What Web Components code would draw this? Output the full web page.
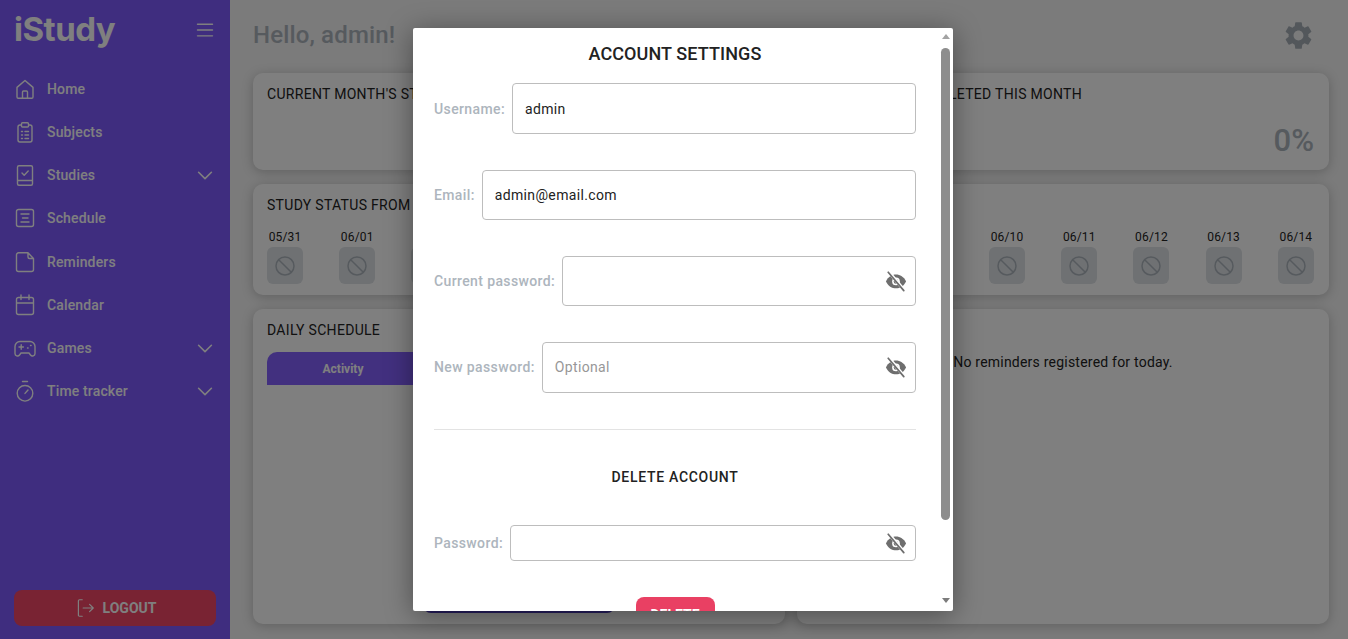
<!DOCTYPE html>
<html lang="en">
<head>
<meta charset="utf-8">
<title>iStudy</title>
<style>
html, body { margin: 0; height: 100%; overflow: hidden; }
body { font-family: Roboto, "Liberation Sans", sans-serif; }
</style>
</head>
<body>
<study-app>
  <side-bar>
    <nav-item icon="home">Home</nav-item>
    <nav-item icon="clipboard">Subjects</nav-item>
    <nav-item icon="book" more>Studies</nav-item>
    <nav-item icon="schedule">Schedule</nav-item>
    <nav-item icon="note">Reminders</nav-item>
    <nav-item icon="calendar">Calendar</nav-item>
    <nav-item icon="gamepad" more>Games</nav-item>
    <nav-item icon="stopwatch" more>Time tracker</nav-item>
  </side-bar>
  <dash-board>
    <dash-card heading="CURRENT MONTH'S STUDIES" style="--h:97px"></dash-card>
    <dash-card heading="% OF STUDIES COMPLETED THIS MONTH" style="--h:97px"><big-stat>0%</big-stat></dash-card>
    <dash-card wide heading="STUDY STATUS FROM" style="--h:111px">
      <day-strip days="05/31,06/01,06/02,06/03,06/04,06/05,06/06,06/07,06/08,06/09,06/10,06/11,06/12,06/13,06/14"></day-strip>
    </dash-card>
    <dash-card heading="DAILY SCHEDULE" style="--h:315px"><schedule-table></schedule-table></dash-card>
    <dash-card heading="TODAY'S REMINDERS" style="--h:315px"><empty-note>No reminders registered for today.</empty-note></dash-card>
  </dash-board>
  <settings-modal>
    <field-row label="Username:">admin</field-row>
    <field-row label="Email:">admin@email.com</field-row>
    <field-row label="Current password:" secret></field-row>
    <field-row label="New password:" secret placeholder="Optional"></field-row>
    <delete-section>
      <field-row label="Password:" secret compact></field-row>
    </delete-section>
  </settings-modal>
</study-app>

<script>
const ICONS = {
  home: 'M4 20V10.4L12 3.5l8 6.9V20a1.3 1.3 0 0 1-1.3 1.3H5.300A1.3 1.3 0 0 1 4 20zM9.500 21.300V15a1 1 0 0 1 1-1h3a1 1 0 0 1 1 1v6.300',
  clipboard: 'M8.500 5H7a2 2 0 0 0-2 2v13a2 2 0 0 0 2 2h10a2 2 0 0 0 2-2V7a2 2 0 0 0-2-2h-1.500M9.500 2.800h5a1 1 0 0 1 1 1V6a1 1 0 0 1-1 1h-5a1 1 0 0 1-1-1V3.800a1 1 0 0 1 1-1zM8.500 11.500h1M12 11.500h3.500M8.500 15h1M12 15h3.500M8.500 18.500h1M12 18.500h3.500',
  book: 'M6 2.800h12a1.500 1.500 0 0 1 1.500 1.500v16.400a1.500 1.500 0 0 1-1.500 1.500H6a1.500 1.500 0 0 1-1.500-1.500V4.300A1.500 1.500 0 0 1 6 2.800zM4.500 17.500h15M9 10l2.200 2.200L15.200 8',
  schedule: 'M5.500 3.500h13a2 2 0 0 1 2 2v13a2 2 0 0 1-2 2h-13a2 2 0 0 1-2-2v-13a2 2 0 0 1 2-2zM8 8h8M9.500 12H15M8 16h8',
  note: 'M5.500 2.800H15l5.500 5.700v11a2 2 0 0 1-2 2h-13a2 2 0 0 1-2-2V4.800a2 2 0 0 1 2-2zM15 2.800V7a1.500 1.500 0 0 0 1.500 1.500h4',
  calendar: 'M5.500 4.500h13a2 2 0 0 1 2 2v13a2 2 0 0 1-2 2h-13a2 2 0 0 1-2-2v-13a2 2 0 0 1 2-2zM3.500 10h17M8 2v4.500M16 2v4.500',
  gamepad: 'M7 5.500h10a5 5 0 0 1 5 5v7a2.500 2.500 0 0 1-4.500 1.500L16 17H8l-1.500 2A2.500 2.500 0 0 1 2 17.500v-7a5 5 0 0 1 5-5zM6 11h4.400M8.200 8.800v4.400M14.500 12h.6M17.500 9.500h.6',
  stopwatch: 'M12 6.500a7.800 7.800 0 1 0 0 15.600 7.800 7.800 0 0 0 0-15.600zM9.500 2.500h5M12 14.400l3-3.400',
  chevron: 'M5 9l7 7 7-7',
  menu: 'M3 5h18M3 12h18M3 19h18',
  logout: 'M9 3H6a1.200 1.200 0 0 0-1.200 1.200v15.600A1.200 1.200 0 0 0 6 21h3M10 12h11M17 8l4 4-4 4',
  ban: 'M12 3a9 9 0 1 0 0 18 9 9 0 0 0 0-18zM5.700 5.700l12.600 12.600'
};
const GEAR = 'M19.14 12.94c.04-.3.06-.61.06-.94 0-.32-.02-.64-.07-.94l2.03-1.58a.49.49 0 0 0 .12-.61l-1.920-3.320a.488.488 0 0 0-.59-.22l-2.390.96c-.5-.38-1.030-.7-1.620-.94l-.36-2.540a.484.484 0 0 0-.48-.41h-3.840c-.24 0-.43.17-.47.41l-.36 2.540c-.59.24-1.130.57-1.620.94l-2.390-.96c-.22-.08-.47 0-.59.22L2.740 8.870c-.12.21-.08.47.12.61l2.030 1.580c-.05.3-.09.63-.09.94s.02.64.07.94l-2.030 1.580a.49.49 0 0 0-.12.61l1.920 3.320c.12.22.37.29.59.22l2.390-.96c.5.38 1.030.7 1.620.94l.36 2.54c.05.24.24.41.48.41h3.840c.24 0 .44-.17.47-.41l.36-2.540c.59-.24 1.130-.56 1.620-.94l2.390.96c.22.08.47 0 .59-.22l1.920-3.320c.12-.22.07-.47-.12-.61l-2.010-1.580zM12 15.600c-1.980 0-3.600-1.620-3.600-3.600s1.620-3.600 3.600-3.600 3.600 1.620 3.600 3.600-1.620 3.600-3.600 3.600z';

function strokeIcon(name, size, width) {
  return `<svg width="${size}" height="${size}" viewBox="0 0 24 24" fill="none" stroke="currentColor"
    stroke-width="${width || 1.4}" stroke-linecap="round" stroke-linejoin="round"><path d="${ICONS[name]}"/></svg>`;
}

class StudyApp extends HTMLElement {
  constructor() {
    super();
    this.attachShadow({ mode: 'open' }).innerHTML = `
<style>
:host { display: flex; height: 639px; overflow: hidden; background: #f6f6f6; position: relative; }
</style>
<slot></slot>`;
  }
}

class SideBar extends HTMLElement {
  constructor() {
    super();
    this.attachShadow({ mode: 'open' }).innerHTML = `
<style>
:host { display: flex; flex-direction: column; flex: 0 0 230px; height: 100%; box-sizing: border-box; background: #7e5bff; color: #fff; }
.brand { display: flex; justify-content: space-between; align-items: flex-start; height: 67.3px; padding: 0 15px 0 14px; }
.logo { font: 700 33px/58px Inter, sans-serif; letter-spacing: -.5px; color: #fff; }
.menu { display: flex; margin-top: 20px; }
.logout { display: flex; align-items: center; justify-content: center; gap: 7px; margin: auto 14px 13px; height: 36px; padding-bottom: 1px; box-sizing: border-box;
  border-radius: 8px; background: #f34666; font: 700 14px Roboto, sans-serif; color: #fff; }
</style>
<div class="brand"><span class="logo">iStudy</span><span class="menu">${strokeIcon('menu', 20, 1.7)}</span></div>
<slot></slot>
<div class="logout">${strokeIcon('logout', 22, 1.3)}<span>LOGOUT</span></div>`;
  }
}

class NavItem extends HTMLElement {
  constructor() {
    super();
    this.attachShadow({ mode: 'open' });
  }

  connectedCallback() {
    const more = this.hasAttribute('more') ? strokeIcon('chevron', 22, 1.7) : '';
    this.shadowRoot.innerHTML = `
<style>
:host { display: flex; align-items: center; gap: 10px; height: 43.2px; padding: 0 14px 0 13px; font: 500 14px Roboto, sans-serif; letter-spacing: .15px; color: #fff; }
svg { flex: none; display: block; }
.label { flex: 1; }
</style>
${strokeIcon(this.getAttribute('icon'), 24)}<span class="label"><slot></slot></span>${more}`;
  }
}

class DashBoard extends HTMLElement {
  constructor() {
    super();
    this.attachShadow({ mode: 'open' }).innerHTML = `
<style>
:host { display: block; flex: 1; box-sizing: border-box; padding: 0 19px 0 23px; }
header { display: flex; justify-content: space-between; align-items: center; height: 73px; padding-bottom: 3px; box-sizing: border-box; }
h1 { margin: 0; font: 500 24px Roboto, sans-serif; letter-spacing: .15px; color: #adb5bd; }
svg { display: block; margin-right: 14px; fill: #a6aeb6; }
.grid { display: grid; grid-template-columns: 532px 532px; justify-content: space-between; gap: 14px 12px; }
</style>
<header><h1>Hello, admin!</h1><svg width="33" height="33" viewBox="0 0 24 24"><path d="${GEAR}"/></svg></header>
<div class="grid"><slot></slot></div>`;
  }
}

class DashCard extends HTMLElement {
  constructor() {
    super();
    this.attachShadow({ mode: 'open' });
  }

  connectedCallback() {
    this.shadowRoot.innerHTML = `
<style>
:host { display: flex; flex-direction: column; box-sizing: border-box; height: var(--h); padding: 14px; background: #fff; border-radius: 10px;
  box-shadow: 0 2px 12px rgba(0,0,0,.22); }
:host([wide]) { grid-column: 1 / -1; }
h2 { margin: 0; font: 400 14px/15px Roboto, sans-serif; letter-spacing: .3px; color: #222; }
.body { flex: 1; display: flex; flex-direction: column; min-height: 0; }
</style>
<h2>${this.getAttribute('heading')}</h2>
<div class="body"><slot></slot></div>`;
  }
}

class BigStat extends HTMLElement {
  constructor() {
    super();
    this.attachShadow({ mode: 'open' }).innerHTML = `
<style>
:host { display: block; margin: 21px 1px 0 0; text-align: right; font: 500 31px/36px Roboto, sans-serif; color: #adb5bd; }
</style>
<slot></slot>`;
  }
}

class DayStrip extends HTMLElement {
  constructor() {
    super();
    this.attachShadow({ mode: 'open' });
  }

  connectedCallback() {
    const days = this.getAttribute('days').split(',').map(d => `
      <div class="day"><span>${d}</span><div class="box">${strokeIcon('ban', 24, 1.5)}</div></div>`).join('');
    this.shadowRoot.innerHTML = `
<style>
:host { display: flex; justify-content: space-between; margin: 17px 1px 0 0; }
.day { display: flex; flex-direction: column; align-items: center; gap: 3px; font: 400 12px/14px Roboto, sans-serif; letter-spacing: .15px; color: #222; }
.box { display: flex; align-items: center; justify-content: center; width: 36px; height: 37px; border-radius: 6px; background: #dee2e6; color: #adb5bd; }
</style>
${days}`;
  }
}

class ScheduleTable extends HTMLElement {
  constructor() {
    super();
    this.attachShadow({ mode: 'open' }).innerHTML = `
<style>
:host { display: flex; flex-direction: column; flex: 1; margin-top: 14px; }
.head { display: flex; height: 33px; align-items: center; border-radius: 10px 10px 0 0; background: #8560ff; color: #fff; font: 700 12px Roboto, sans-serif; }
.head span { flex: 0 0 152px; text-align: center; }
.add { align-self: center; width: 192px; height: 36px; margin: auto 0 -3px; border-radius: 8px; background: #4a3ab8; }
</style>
<div class="head"><span>Activity</span></div>
<div class="add"></div>`;
  }
}

class EmptyNote extends HTMLElement {
  constructor() {
    super();
    this.attachShadow({ mode: 'open' }).innerHTML = `
<style>
:host { display: block; margin-top: 16px; text-align: center; font: 400 14px/16px Roboto, sans-serif; letter-spacing: .22px; color: #222; }
</style>
<slot></slot>`;
  }
}

class SettingsModal extends HTMLElement {
  constructor() {
    super();
    this.attachShadow({ mode: 'open' }).innerHTML = `
<style>
:host { position: absolute; inset: 0; display: block; background: rgba(0,0,0,.5); }
.dialog { position: absolute; left: 413px; top: 28px; width: 540px; height: 583px; display: flex; background: #fff; border-radius: 2px;
  box-shadow: 0 4px 28px rgba(0,0,0,.4); color: #222; }
.body { flex: 1; min-width: 0; overflow: hidden; box-sizing: border-box; padding: 0 25px 0 21px; }
h3 { margin: 0; height: 55.4px; padding-top: 15px; box-sizing: border-box; text-align: center; font: 500 18px/22px Roboto, sans-serif; letter-spacing: .1px; color: #222; }
.bar { flex: 0 0 9px; margin-right: 3px; display: flex; flex-direction: column; align-items: center; padding: 6px 0 8px; box-sizing: border-box; }
.up, .down { width: 0; height: 0; border-left: 4.500px solid transparent; border-right: 4.500px solid transparent; }
.up { border-bottom: 5px solid #a3a3a3; }
.down { border-top: 5px solid #7c7c7c; margin-top: auto; }
.thumb { width: 9px; height: 472px; margin-top: 9px; border-radius: 5px; background: #8d8d8d; }
</style>
<div class="dialog">
  <div class="body"><h3>ACCOUNT SETTINGS</h3><slot></slot></div>
  <div class="bar"><div class="up"></div><div class="thumb"></div><div class="down"></div></div>
</div>`;
  }
}

class FieldRow extends HTMLElement {
  constructor() {
    super();
    this.attachShadow({ mode: 'open' });
  }

  connectedCallback() {
    const eye = this.hasAttribute('secret') ? `
      <svg class="eye" width="22" height="22" viewBox="0 0 24 24">
        <path d="M1 12.500C3.500 7.500 7.500 5 12 5s8.500 2.500 11 7.500C20.500 17.500 16.500 20 12 20S3.500 17.500 1 12.500z" fill="#6e6e6e"/>
        <circle cx="12" cy="12.500" r="4.200" fill="#fff"/>
        <circle cx="12" cy="12.500" r="2.500" fill="#6e6e6e"/>
        <path d="M4.500 2.500l16 19" stroke="#fff" stroke-width="3.600"/>
        <path d="M3.500 2.500l17 20" stroke="#6e6e6e" stroke-width="1.900" stroke-linecap="round"/>
      </svg>` : '';
    const hint = this.getAttribute('placeholder') || '';
    this.shadowRoot.innerHTML = `
<style>
:host { display: flex; align-items: center; gap: 7px; margin-bottom: 36px; font: 500 14px Roboto, sans-serif; }
label { flex: none; color: #adb5bd; letter-spacing: .38px; }
.input { flex: 1; display: flex; align-items: center; height: 50.3px; box-sizing: border-box; padding: 0 8px 0 12px; border: 1px solid #bdbdbd; border-radius: 4px;
  font-weight: 400; letter-spacing: .35px; color: #222; }
:host([compact]) .input { height: 36px; }
.text { flex: 1; }
.hint { color: #979797; }
.eye { flex: none; }
</style>
<label>${this.getAttribute('label')}</label>
<div class="input"><span class="text"><slot></slot><span class="hint">${hint}</span></span>${eye}</div>`;
  }
}

class DeleteSection extends HTMLElement {
  constructor() {
    super();
    this.attachShadow({ mode: 'open' }).innerHTML = `
<style>
:host { display: block; border-top: 1px solid #e3e3e3; }
h4 { margin: 37px 0 38px; text-align: center; font: 500 14px/20px Roboto, sans-serif; letter-spacing: .7px; color: #222; }
.delete { display: block; box-sizing: border-box; width: 79px; height: 36px; margin: 0 auto; border-radius: 8px; background: #e94063; color: #fff;
  text-align: center; font: 700 14px/36px Roboto, sans-serif; }
</style>
<h4>DELETE ACCOUNT</h4>
<slot></slot>
<div class="delete">DELETE</div>`;
  }
}

customElements.define('study-app', StudyApp);
customElements.define('side-bar', SideBar);
customElements.define('nav-item', NavItem);
customElements.define('dash-board', DashBoard);
customElements.define('dash-card', DashCard);
customElements.define('big-stat', BigStat);
customElements.define('day-strip', DayStrip);
customElements.define('schedule-table', ScheduleTable);
customElements.define('empty-note', EmptyNote);
customElements.define('settings-modal', SettingsModal);
customElements.define('field-row', FieldRow);
customElements.define('delete-section', DeleteSection);
</script>
</body>
</html>
